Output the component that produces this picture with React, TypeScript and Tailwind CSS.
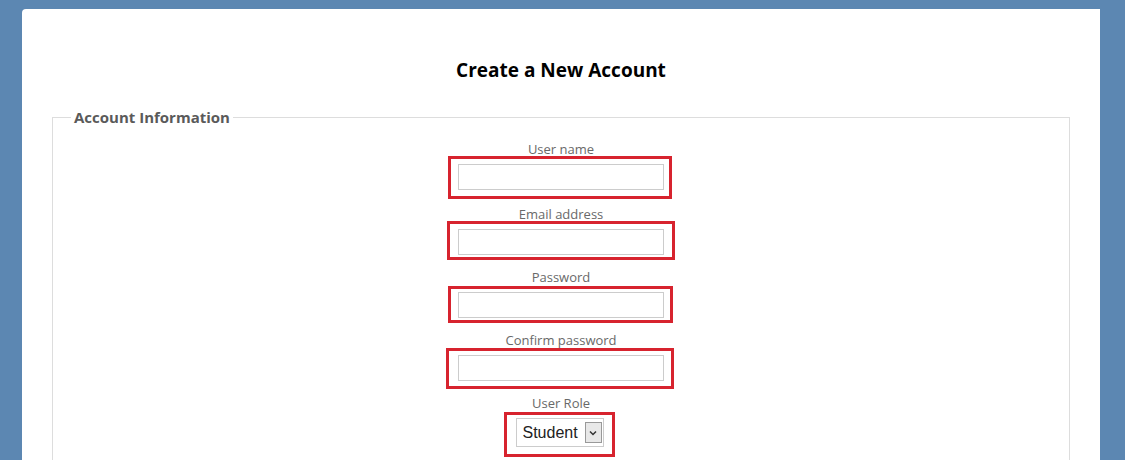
import React from 'react';

type Field = {
  label: string;
  gap: string;
  // red annotation box, relative to the input
  box: { left: number; top: number; w: number; h: number };
};

const fields: Field[] = [
  { label: 'User name', gap: 'mt-0', box: { left: -10, top: -8, w: 224, h: 43 } },
  { label: 'Email address', gap: 'mt-[16px]', box: { left: -11, top: -8, w: 228, h: 39 } },
  { label: 'Password', gap: 'mt-[14px]', box: { left: -10, top: -6, w: 225, h: 37 } },
  { label: 'Confirm password', gap: 'mt-[14px]', box: { left: -12, top: -7, w: 228, h: 41 } },
];

const RedBox = ({ box }: { box: Field['box'] }) => (
  <div
    className="pointer-events-none absolute border-[3px] border-[#d7232e]"
    style={{ left: box.left, top: box.top, width: box.w, height: box.h }}
  />
);

const TextField = ({ field }: { field: Field }) => (
  <div className={`flex flex-col items-center ${field.gap}`}>
    <label className="block h-[16px] text-[13px] leading-[16px] text-[#696969]">{field.label}</label>
    <div className="relative mt-[7px]">
      <input
        type={field.label.includes('assword') ? 'password' : 'text'}
        className="block h-[26px] w-[206px] border border-[#cccccc] bg-white outline-none"
      />
      <RedBox box={field.box} />
    </div>
  </div>
);

export default function App() {
  return (
    <div
      className="h-[460px] w-[1125px] overflow-hidden bg-[#5c87b2] pt-[9px] pl-[22px]"
      style={{ fontFamily: '"Open Sans", "DejaVu Sans", sans-serif' }}
    >
      <div className="h-[460px] w-[1078px] rounded-tl-[4px] bg-white px-[30px] pt-[49px]">
        <h2 className="text-center text-[19px] font-bold leading-[24px] text-black">Create a New Account</h2>

        <fieldset className="mt-[26px] h-[400px] border border-[#dddddd] px-0">
          <legend className="ml-[18px] px-[3px] text-[15px] font-bold leading-[18px] text-[#5a5a5a]">
            Account Information
          </legend>

          <div className="flex flex-col pt-[15px]">
            {fields.map((f) => (
              <TextField key={f.label} field={f} />
            ))}

            <div className="mt-[14px] flex flex-col items-center">
              <label className="block h-[16px] text-[13px] leading-[16px] text-[#696969]">User Role</label>
              <div className="relative mt-[7px] mr-[3px]">
                <div className="flex h-[29px] w-[88px] items-center border border-[#cccccc] bg-white pl-[6px]">
                  <span className="text-[16px] text-[#222]" style={{ fontFamily: '"Liberation Sans", Arial, sans-serif' }}>
                    Student
                  </span>
                  <div className="ml-auto mr-[1px] flex h-[21px] w-[17px] items-center justify-center border border-[#999] bg-[#e8e8e8]">
                    <svg width="8" height="6" viewBox="0 0 8 6">
                      <path d="M1 1.5 L4 4.5 L7 1.5" fill="none" stroke="#333" strokeWidth="1.5" />
                    </svg>
                  </div>
                </div>
                <RedBox box={{ left: -12, top: -6, w: 111, h: 45 }} />
              </div>
            </div>
          </div>
        </fieldset>
      </div>
    </div>
  );
}
